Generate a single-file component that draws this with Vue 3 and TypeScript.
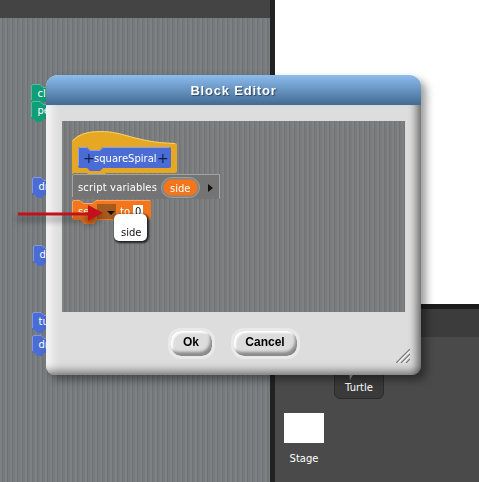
<script setup lang="ts">
interface Stub {
  label: string
  left: number
  top: number
  color: string
}

const stubs: Stub[] = [
  { label: 'cl', left: 31, top: 84, color: '#0f9e78' },
  { label: 'pe', left: 31, top: 101, color: '#0f9e78' },
  { label: 'dr', left: 32, top: 177, color: '#4a6cd4' },
  { label: 'd', left: 33, top: 245, color: '#4a6cd4' },
  { label: 'tu', left: 32, top: 312, color: '#4a6cd4' },
  { label: 'dr', left: 32, top: 335, color: '#4a6cd4' }
]
</script>

<template>
  <div class="ide">
    <section class="left-pane">
      <div class="top-bar"></div>
      <div class="scripts">
        <svg
          v-for="(stub, i) in stubs"
          :key="i"
          class="stub"
          :style="{ left: stub.left + 'px', top: stub.top - 18 + 'px' }"
          width="20"
          height="22"
        >
          <path d="M2 0H9L12 3H20V18H12L10 21H5L3 18H2Q0 18 0 16V2Q0 0 2 0Z" :fill="stub.color" />
          <path d="M.5 16V2Q.5.5 2 .5H9L12 3.5H20" fill="none" stroke="#fff" stroke-opacity=".3" />
          <text x="6.500" y="13">{{ stub.label }}</text>
        </svg>
      </div>
    </section>
    <div class="divider"></div>
    <section class="right-pane">
      <div class="stage"></div>
      <div class="stage-strip"></div>
      <div class="tab-bar"></div>
      <div class="corral">
        <div class="sprite-tile">
          <svg class="turtle-icon" width="8" height="8"><path d="M1 0H6L2 7Z" fill="#9a9a9a" /></svg>
          <span>Turtle</span>
        </div>
        <div class="stage-tile">
          <div class="stage-thumb"></div>
          <span>Stage</span>
        </div>
      </div>
    </section>

    <div class="dialog">
      <header class="dialog-title">Block Editor</header>
      <div class="dialog-body">
        <div class="canvas">
          <svg class="blocks" width="343" height="191" viewBox="62 121 343 191">
            <!-- hat -->
            <path d="M72 176V141Q80 131 100 131C125 131 135 142 175 143Q177 143 177 145V171Q177 173 175 173H106L103 176H90L87 173H74Q72 173 72 176Z" fill="#e6a822" />
            <path d="M72.5 141Q80 131.5 100 131.5C125 131.5 135 142.5 175 143.5" fill="none" stroke="#f6cf6e" />
            <!-- custom block prototype -->
            <path d="M80 147H87L90 150H100L103 147H169Q171 147 171 149V166Q171 168 169 168H103L100 171H90L87 168H80Q78 168 78 166V149Q78 147 80 147Z" fill="#4a6cd4" />
            <path d="M78.5 166V149Q78.5 147.500 80 147.500H87L90 150.500H100L103 147.500H169" fill="none" stroke="#8aa2ea" />
            <text class="sym" x="83" y="163">+</text>
            <text class="label" x="94" y="162">squareSpiral</text>
            <text class="sym" x="157" y="163">+</text>

            <!-- script variables -->
            <path d="M74 174H218Q220 174 220 176V197Q220 199 218 199H74Q72 199 72 197V176Q72 174 74 174Z" fill="#747474" />
            <path d="M72.500 197V176Q72.500 174.500 74 174.500H219.500V199" fill="none" stroke="#a4a4a4" />
            <text class="label spaced" x="78" y="191">script variables</text>
            <rect x="161.500" y="177.500" width="38" height="20" rx="10" fill="#858585" stroke="#9e9e9e" />
            <rect x="163.500" y="179.500" width="34" height="16" rx="8" fill="#f3761d" />
            <text class="label" x="170" y="191.500">side</text>
            <path d="M208 184L213 188L208 192Z" fill="#111" />

            <!-- set block -->
            <path d="M74 200H80L83 203H93L96 200H149Q151 200 151 202V218Q151 220 149 220H97L94 224H84L81 220H74Q72 220 72 218V202Q72 200 74 200Z" fill="#f3761d" />
            <path d="M72.500 218V202Q72.500 200.500 74 200.500H80L83 203.500H93L96 200.500H150" fill="none" stroke="#f9a566" />
            <text class="label" x="78" y="215">set</text>
            <rect x="97" y="204" width="19" height="15" fill="#a55a1e" />
            <path d="M107 211H115L111 215Z" fill="#111" />
            <text class="label" x="120" y="215">to</text>
            <rect x="133" y="205" width="10" height="12" fill="#fff" />
            <text class="label num" x="135" y="215">0</text>
          </svg>
          <div class="tooltip">side</div>
        </div>
        <div class="buttons">
          <button class="btn btn-ok">Ok</button>
          <button class="btn btn-cancel">Cancel</button>
        </div>
      </div>
      <svg class="resize" width="14" height="14">
        <path d="M0 14L14 0M5 14L14 5M10 14L14 10" stroke="#777" stroke-width="1.200" fill="none" />
        <path d="M2 14L14 2M7 14L14 7" stroke="#fff" fill="none" />
      </svg>
    </div>

    <svg class="arrow" width="100" height="24">
      <path d="M0 7.500H70V0L85 8L70 16V10.500H0Z" fill="#c4101a" />
    </svg>
  </div>
</template>

<style scoped>
.ide {
  position: relative;
  display: flex;
  width: 479px;
  height: 482px;
  overflow: hidden;
  background: #4a4a4a;
  font-family: 'DejaVu Sans', sans-serif;
}

.left-pane {
  width: 270px;
  display: flex;
  flex-direction: column;
}

.top-bar {
  height: 18px;
  background: #444;
}

.scripts {
  position: relative;
  flex: 1;
  background: repeating-linear-gradient(90deg, #7c8184 0, #7c8184 2px, #6e7275 2px, #6e7275 3px, #777b7e 3px, #777b7e 5px);
}

.stub {
  position: absolute;
}

.stub text {
  font-size: 10px;
  fill: #fff;
}

.divider {
  width: 5px;
  background: #222;
}

.right-pane {
  flex: 1;
  display: flex;
  flex-direction: column;
}

.stage {
  height: 304px;
  background: #fff;
}

.stage-strip {
  height: 5px;
  background: #1c1c1c;
}

.tab-bar {
  height: 28px;
  background: #3c3c3c;
}

.corral {
  flex: 1;
  display: flex;
  flex-direction: column;
  background: #4a4a4a;
  color: #fff;
  font-size: 10px;
}

.sprite-tile {
  width: 50px;
  height: 50px;
  margin: 12px 0 0 59px;
  display: flex;
  flex-direction: column;
  align-items: center;
  justify-content: flex-end;
  padding-bottom: 5px;
  box-sizing: border-box;
  background: #3a3a3a;
  border: 1px solid #2c2c2c;
  border-radius: 6px;
}

.turtle-icon {
  margin-right: 14px;
  margin-bottom: 1px;
}

.stage-tile {
  width: 40px;
  margin: 14px 0 0 9px;
  display: flex;
  flex-direction: column;
  align-items: center;
  gap: 10px;
}

.stage-thumb {
  width: 40px;
  height: 30px;
  background: #fff;
}

.dialog {
  position: absolute;
  left: 46px;
  top: 75px;
  width: 375px;
  height: 300px;
  display: flex;
  flex-direction: column;
  border-radius: 12px 12px 9px 9px;
  overflow: hidden;
  background: #ddd;
  filter: drop-shadow(5px 5px 4px rgba(0, 0, 0, 0.4));
}

.dialog-title {
  height: 30px;
  flex: none;
  display: flex;
  align-items: center;
  justify-content: center;
  background: linear-gradient(#8cbcee, #426a92);
  color: #fff;
  font-family: 'Liberation Sans', sans-serif;
  font-size: 13px;
  font-weight: 700;
  letter-spacing: 0.8px;
  text-shadow: 1px 1px 1px #2c4560;
}

.dialog-body {
  flex: 1;
  display: flex;
  flex-direction: column;
  padding: 16px 16px 0;
  box-shadow:
    inset -11px 0 8px -7px rgba(0, 0, 0, 0.55),
    inset 0 -12px 8px -8px rgba(0, 0, 0, 0.45),
    inset 14px 0 10px -8px rgba(255, 255, 255, 0.75);
}

.canvas {
  position: relative;
  height: 191px;
  background: repeating-linear-gradient(90deg, #7f8283 0, #7f8283 2px, #717374 2px, #717374 3px, #797b7c 3px, #797b7c 5px);
}

.blocks {
  position: absolute;
  left: 0;
  top: 0;
  overflow: visible;
}

.label {
  font-size: 10px;
  fill: #fff;
}

.label.spaced {
  letter-spacing: 0.15px;
}

.label.num {
  fill: #111;
}

.sym {
  font-size: 14px;
  fill: #111d4f;
}

.arrow {
  position: absolute;
  left: 18px;
  top: 205px;
  overflow: visible;
  filter: drop-shadow(-1px 5px 3px rgba(0, 0, 0, 0.45));
}

.tooltip {
  position: absolute;
  left: 52px;
  top: 93px;
  width: 33px;
  height: 27px;
  box-sizing: border-box;
  padding: 13px 0 0 7px;
  background: #fff;
  border-radius: 5px;
  box-shadow: 1px 1px 2px 1px #222;
  font-size: 10px;
  line-height: 12px;
  color: #111;
}

.buttons {
  display: flex;
  justify-content: center;
  gap: 16px;
  margin-top: 16px;
}

.btn {
  height: 31px;
  padding: 0 0 3px;
  border: 3px solid #e9e9e9;
  border-radius: 13px;
  background: #ddd;
  box-shadow:
    inset -3px -5px 3px -1px #8a8a8a,
    inset 2px 2px 2px #fff;
  color: #000;
  font-family: 'Liberation Sans', sans-serif;
  font-size: 12px;
  font-weight: 700;
}

.btn-ok {
  width: 47px;
}

.btn-cancel {
  width: 69px;
}

.resize {
  position: absolute;
  right: 11px;
  bottom: 12px;
}
</style>
